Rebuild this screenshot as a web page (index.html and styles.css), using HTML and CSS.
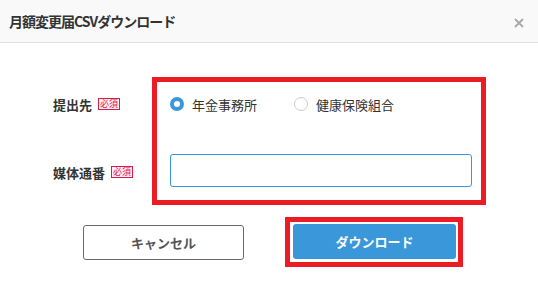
FILE: index.html
```html
<!DOCTYPE html>
<html lang="ja">
<head>
<meta charset="utf-8">
<title>月額変更届CSVダウンロード</title>
<link rel="stylesheet" href="styles.css">
</head>
<body>
<div class="modal">
	<div class="modal_head">
		<h1 class="modal_title">月額変更届CSVダウンロード</h1>
		<a href="#" class="modal_close">
			<svg width="10" height="10" viewBox="0 0 10 10"><path d="M1 1L9 9M9 1L1 9" stroke="#a8a8a8" stroke-width="1.8" fill="none"/></svg>
		</a>
	</div>
	<div class="modal_body">
		<div class="form">
			<div class="labels">
				<div class="label label_radio">提出先<span class="req">必須</span></div>
				<div class="label label_input">媒体通番<span class="req">必須</span></div>
			</div>
			<div class="fields mark">
				<div class="radios">
					<label class="radio"><span class="dot on"></span>年金事務所</label>
					<label class="radio"><span class="dot"></span>健康保険組合</label>
				</div>
				<input type="text" class="text_input">
			</div>
		</div>
		<div class="btns">
			<a href="#" class="btn btn_cancel">キャンセル</a>
			<div class="mark mark_btn">
				<a href="#" class="btn btn_main">ダウンロード</a>
			</div>
		</div>
	</div>
</div>
</body>
</html>
```

FILE: styles.css
```css
*{ padding:0; margin:0; box-sizing:border-box;}
body{ background:#fff; color:#333; font-family:"Noto Sans CJK JP","Noto Sans",sans-serif; font-size:13px;}
a{ text-decoration:none;}

.modal_head{ height:43px; background:#f9f9f9; border-bottom:1px solid #e3e3e3; display:flex; align-items:center; justify-content:space-between; padding:0 14px 0 9px;}
.modal_title{ font-size:14px; font-weight:bold; color:#333; letter-spacing:-1px;}
.modal_close{ display:flex; margin-top:3px;}

.modal_body{ padding-top:34px;}
.form{ display:flex; padding-left:53px;}
.labels{ width:99px; padding-top:15px;}
.label{ display:flex; align-items:center; font-weight:bold; color:#333;}
.label_radio{ height:24px;}
.label_input{ height:33px; margin-top:38px; padding-top:3px;}
.req{ display:inline-block; border:1px solid #d9194a; color:#d9194a; background:#fdf0f3; font-size:9px; line-height:10px; padding:0 1px; margin-left:6px; font-weight:normal;}

.mark{ border:5px solid #ec1c24;}
.fields{ width:334px; padding:10px 9px 13px 13px;}
.radios{ display:flex; height:24px; align-items:center;}
.radio{ display:flex; align-items:center; width:124px;}
.dot{ width:14px; height:14px; border-radius:50%; border:1px solid #ccc; margin-right:8px; background:#fff;}
.dot.on{ border:4px solid #3a97da;}
.text_input{ display:block; width:302px; height:33px; margin-top:38px; border:1px solid #3a97da; border-radius:3px; outline:none;}

.btns{ display:flex; align-items:center; padding-left:83px; margin-top:12px;}
.btn{ display:flex; align-items:center; justify-content:center; width:161px; height:35px; border-radius:3px; font-weight:bold; font-size:13px;}
.btn_cancel{ border:1px solid #6a6a6a; color:#555; margin-right:41px; margin-top:1px;}
.mark_btn{ padding:2px 2px 3px 3px;}
.btn_main{ width:163px; background:#3a97da; color:#fff;}
```
